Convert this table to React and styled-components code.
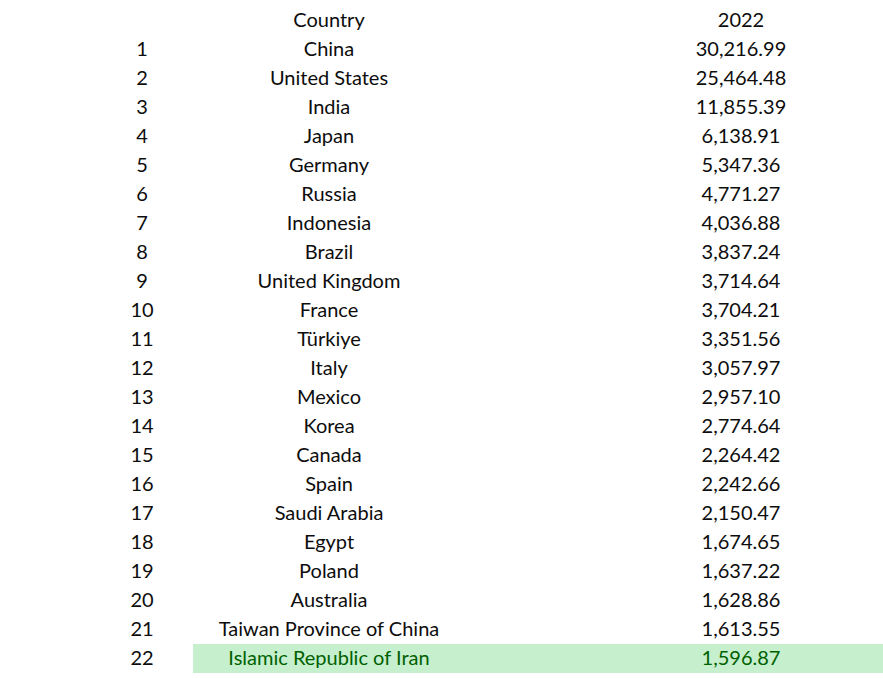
import styled, { createGlobalStyle } from 'styled-components';

const rows = [
  ['China', '30,216.99'],
  ['United States', '25,464.48'],
  ['India', '11,855.39'],
  ['Japan', '6,138.91'],
  ['Germany', '5,347.36'],
  ['Russia', '4,771.27'],
  ['Indonesia', '4,036.88'],
  ['Brazil', '3,837.24'],
  ['United Kingdom', '3,714.64'],
  ['France', '3,704.21'],
  ['Türkiye', '3,351.56'],
  ['Italy', '3,057.97'],
  ['Mexico', '2,957.10'],
  ['Korea', '2,774.64'],
  ['Canada', '2,264.42'],
  ['Spain', '2,242.66'],
  ['Saudi Arabia', '2,150.47'],
  ['Egypt', '1,674.65'],
  ['Poland', '1,637.22'],
  ['Australia', '1,628.86'],
  ['Taiwan Province of China', '1,613.55'],
  ['Islamic Republic of Iran', '1,596.87'],
];

const GlobalStyle = createGlobalStyle`
  body {
    margin: 0;
    background: #fff;
    font-family: Lato, "Liberation Sans", sans-serif;
  }
`;

const App = () => {
  return (
    <>
      <GlobalStyle />
      <Sheet>
        <Row>
          <Rank />
          <Country>Country</Country>
          <Value>2022</Value>
        </Row>
        {rows.map(([name, value], i) => {
          const hl = i === rows.length - 1;
          return (
            <Row key={name}>
              <Rank>{i + 1}</Rank>
              <Country $hl={hl}>{name}</Country>
              <Value $hl={hl}>{value}</Value>
            </Row>
          );
        })}
      </Sheet>
    </>
  );
};

const Sheet = styled.div`
  padding: 6px 0 0 100px;
  color: #0d0d0d;
  font-size: 20px;
`;

const Row = styled.div`
  display: grid;
  grid-template-columns: 84px 9px 272px 1fr;
  height: 29px;
  align-items: stretch;
`;

const Cell = styled.div`
  display: flex;
  align-items: center;
  padding-bottom: 3px;
  white-space: nowrap;
`;

const Rank = styled(Cell)`
  grid-column: 1;
  justify-content: center;
`;

const Country = styled(Cell)`
  grid-column: 3;
  justify-content: center;
  background: ${p => (p.$hl ? '#c6efce' : 'transparent')};
  color: ${p => (p.$hl ? '#006100' : 'inherit')};
`;

const Value = styled(Cell)`
  grid-column: 4;
  justify-content: center;
  padding-left: 134px;
  background: ${p => (p.$hl ? '#c6efce' : 'transparent')};
  color: ${p => (p.$hl ? '#006100' : 'inherit')};
`;

export default App;
